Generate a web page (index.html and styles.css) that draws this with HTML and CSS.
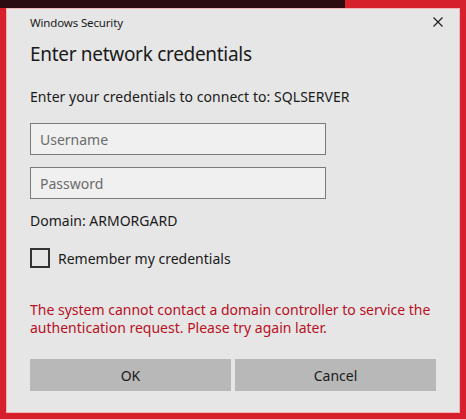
FILE: index.html
```html
<!DOCTYPE html>
<html>
<head>
<meta charset="utf-8">
<link rel="stylesheet" href="styles.css">
</head>
<body>
<div class="dialog">
  <div class="titlebar">
    <span class="title">Windows Security</span>
    <svg class="close" width="10" height="10" viewBox="0 0 10 10"><path d="M0.5 0.5 L9.5 9.5 M9.5 0.5 L0.5 9.5" stroke="#1a1a1a" stroke-width="1.1" fill="none"/></svg>
  </div>
  <h1 class="heading">Enter network credentials</h1>
  <p class="prompt">Enter your credentials to connect to: SQLSERVER</p>
  <div class="field field-user"><span class="placeholder">Username</span></div>
  <div class="field field-pass"><span class="placeholder">Password</span></div>
  <p class="domain">Domain: ARMORGARD</p>
  <div class="remember"><span class="checkbox"></span><span class="remember-label">Remember my credentials</span></div>
  <p class="error">The system cannot contact a domain controller to service the authentication request. Please try again later.</p>
  <div class="buttons">
    <div class="btn">OK</div>
    <div class="btn">Cancel</div>
  </div>
</div>
</body>
</html>
```
FILE: styles.css
```css
html, body {
  margin: 0;
  padding: 0;
}
body {
  width: 466px;
  height: 419px;
  overflow: hidden;
  background: linear-gradient(#2b0c10, #2b0c10) 0 0 / 345px 8px no-repeat, #d6202b;
  font-family: "Noto Sans", "Open Sans", sans-serif;
  color: #1a1a1a;
}
.dialog {
  margin: 8px 0 0 6px;
  width: 454px;
  height: 405px;
  box-sizing: border-box;
  background: #e6e6e6;
  border: 1px solid #f0b4b6;
  padding: 0 23px;
  display: flex;
  flex-direction: column;
}
.titlebar {
  height: 26px;
  display: flex;
  align-items: center;
  justify-content: space-between;
  margin-right: -7px;
}
.title {
  font-size: 11.5px;
  letter-spacing: -0.15px;
}
.heading {
  margin: 5px 0 0;
  font-size: 19px;
  font-weight: normal;
  line-height: 28px;
  letter-spacing: -0.3px;
}
.prompt {
  margin: 19px 0 0;
  font-size: 14px;
  line-height: 20px;
  letter-spacing: 0.05px;
}
.field {
  height: 32px;
  box-sizing: border-box;
  width: 296px;
  border: 1px solid #7a7a7a;
  background: #f0f0f0;
  display: flex;
  align-items: center;
  padding-left: 9px;
}
.field-user { margin-top: 16px; }
.field-pass { margin-top: 12px; }
.placeholder {
  font-size: 14px;
  color: #6b6b6b;
}
.domain {
  margin: 12px 0 0;
  font-size: 14px;
  line-height: 20px;
}
.remember {
  margin-top: 17px;
  height: 20px;
  display: flex;
  align-items: center;
  gap: 8px;
}
.checkbox {
  width: 20px;
  height: 20px;
  box-sizing: border-box;
  border: 2px solid #333333;
}
.remember-label {
  font-size: 14px;
}
.error {
  margin: 33px 0 0;
  font-size: 14px;
  line-height: 18px;
  letter-spacing: 0;
  color: #b8101f;
}
.buttons {
  margin-top: 22px;
  display: flex;
  gap: 4px;
}
.btn {
  flex: 1;
  height: 32px;
  background: #b8b8b8;
  display: flex;
  align-items: center;
  justify-content: center;
  font-size: 14px;
}
```
